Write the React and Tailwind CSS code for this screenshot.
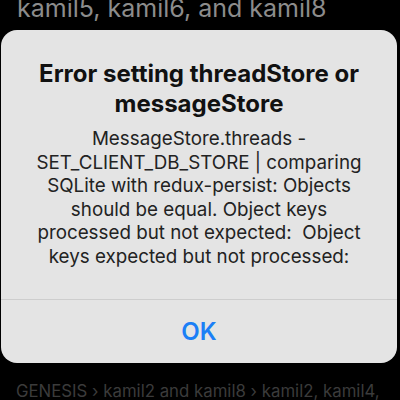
export default function App() {
  const font = { fontFamily: 'Inter, "Noto Sans", sans-serif' }
  return (
    <div className="w-[400px] h-[400px] bg-black overflow-hidden" style={font}>
      <div className="-mt-[4px] pl-[17px] text-[25px] leading-[25px] text-[#8c8c8c] whitespace-nowrap">
        kamil5, kamil6, and kamil8
      </div>
      <div className="ml-[1px] mt-[9px] w-[396px] h-[333px] rounded-[16px] bg-[#e4e4e4] flex flex-col">
        <div className="h-[269px] pt-[29px] flex flex-col items-center text-center">
          <div className="text-[24px] leading-[30px] font-bold text-[#111]">
            <div>Error setting threadStore or</div>
            <div>messageStore</div>
          </div>
          <div className="mt-[8px] text-[18.8px] leading-[23.5px] text-[#222] whitespace-nowrap">
            <div>MessageStore.threads -</div>
            <div>SET_CLIENT_DB_STORE | comparing</div>
            <div>SQLite with redux-persist: Objects</div>
            <div>should be equal. Object keys</div>
            <div className="whitespace-pre">processed but not expected:  Object</div>
            <div>keys expected but not processed:</div>
          </div>
        </div>
        <div className="h-px bg-[#cdcdcd]" />
        <div className="flex-1 flex items-center justify-center">
          <span className="text-[24px] font-semibold text-[#1b7ff6]">OK</span>
        </div>
      </div>
      <div className="mt-[18px] pl-[16px] text-[16.8px] leading-[20px] text-[#3b3b3b] whitespace-nowrap">
        GENESIS › kamil2 and kamil8 › kamil2, kamil4,
      </div>
    </div>
  )
}
